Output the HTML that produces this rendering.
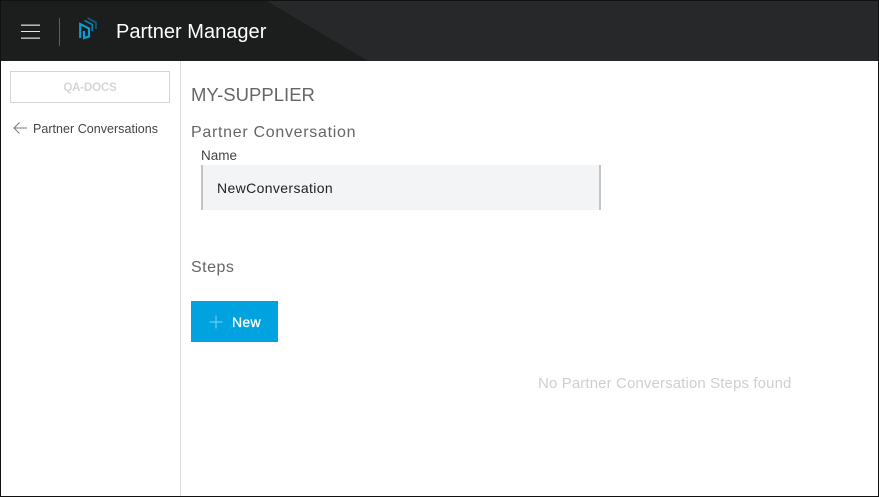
<!DOCTYPE html>
<html>
<head>
<meta charset="utf-8">
<style>
html,body{margin:0;padding:0;background:#fff}
#page{position:relative;width:879px;height:497px;overflow:hidden;background:#fff;font-family:"Liberation Sans",sans-serif}
.t{position:absolute;white-space:nowrap;line-height:20px}
.abs{position:absolute}
</style>
</head>
<body>
<div id="page">
  <div class="abs" style="left:0;top:0;width:879px;height:61px;background:#1c1e1e"></div>
  <svg class="abs" style="left:0;top:0" width="879" height="61" viewBox="0 0 879 61">
    <polygon points="265,0 879,0 879,61 368,61" fill="#27282a"/>
    <g fill="#e6e6e6">
      <rect x="21" y="24.4" width="19" height="1.6" opacity=".75"/>
      <rect x="21" y="31" width="19" height="1"/>
      <rect x="21" y="37.4" width="19" height="1.6" opacity=".75"/>
    </g>
    <rect x="59" y="18" width="1" height="28" fill="#5e6060"/>
    <g fill="none">
      <path d="M80.2 38V24L89 28.5V36.5L84 38V31" stroke="#0f9bd7" stroke-width="2.2"/>
      <path d="M84.5 20.5L92.2 24.5V31" stroke-width="1.6" stroke="#0f7fb0"/>
      <path d="M87.5 18L96 22.5V29" stroke-width="1.6" stroke="#0c5f85"/>
    </g>
  </svg>
  <div class="t" style="left:116px;top:22px;font-size:20px;color:#fff;letter-spacing:.02px">Partner Manager</div>

  <div class="abs" style="left:180px;top:61px;width:1px;height:436px;background:#dcdcdc"></div>

  <div class="abs" style="left:10px;top:71px;width:158px;height:30px;border:1px solid #d4d4d4"></div>
  <div class="t" style="left:10px;top:78px;width:160px;text-align:center;font-size:11.5px;font-weight:bold;color:#d6d6d6;letter-spacing:-.15px">QA-DOCS</div>

  <svg class="abs" style="left:12px;top:121px" width="16" height="14" viewBox="0 0 16 14">
    <path d="M15 7H2M7.5 1.5L2 7L7.5 12.5" fill="none" stroke="#7d7d7d" stroke-width="1.1"/>
  </svg>
  <div class="t" style="left:33px;top:119px;font-size:12.5px;color:#444;letter-spacing:.03px">Partner Conversations</div>

  <div class="t" style="left:191px;top:85px;font-size:18.5px;color:#666;letter-spacing:.02px">MY-SUPPLIER</div>
  <div class="t" style="left:191px;top:123px;font-size:16px;color:#666;letter-spacing:.7px">Partner Conversation</div>
  <div class="t" style="left:201px;top:146px;font-size:13.5px;color:#444">Name</div>

  <div class="abs" style="left:201px;top:165px;width:396px;height:45px;background:#f3f4f6;border-left:2px solid #c4c4c4;border-right:2px solid #c4c4c4"></div>
  <div class="t" style="left:217px;top:178px;font-size:14px;color:#222;letter-spacing:.37px">NewConversation</div>

  <div class="t" style="left:191px;top:258px;font-size:16px;color:#666;letter-spacing:.5px">Steps</div>

  <div class="abs" style="left:191px;top:301px;width:87px;height:41px;background:#00a3e0"></div>
  <svg class="abs" style="left:209px;top:315px" width="14" height="14" viewBox="0 0 14 14">
    <path d="M7 .5V13.5M.5 7H13.5" stroke="#7fd1f0" stroke-width="1" fill="none"/>
  </svg>
  <div class="t" style="left:232px;top:312px;font-size:14px;color:#fff;letter-spacing:.3px;-webkit-text-stroke:.3px #fff">New</div>

  <div class="t" style="left:538px;top:374px;font-size:15px;color:#cfcfcf;letter-spacing:.12px">No Partner Conversation Steps found</div>

  <div class="abs" style="left:0;top:0;width:877px;height:495px;border:1px solid #111"></div>
</div>
</body>
</html>
